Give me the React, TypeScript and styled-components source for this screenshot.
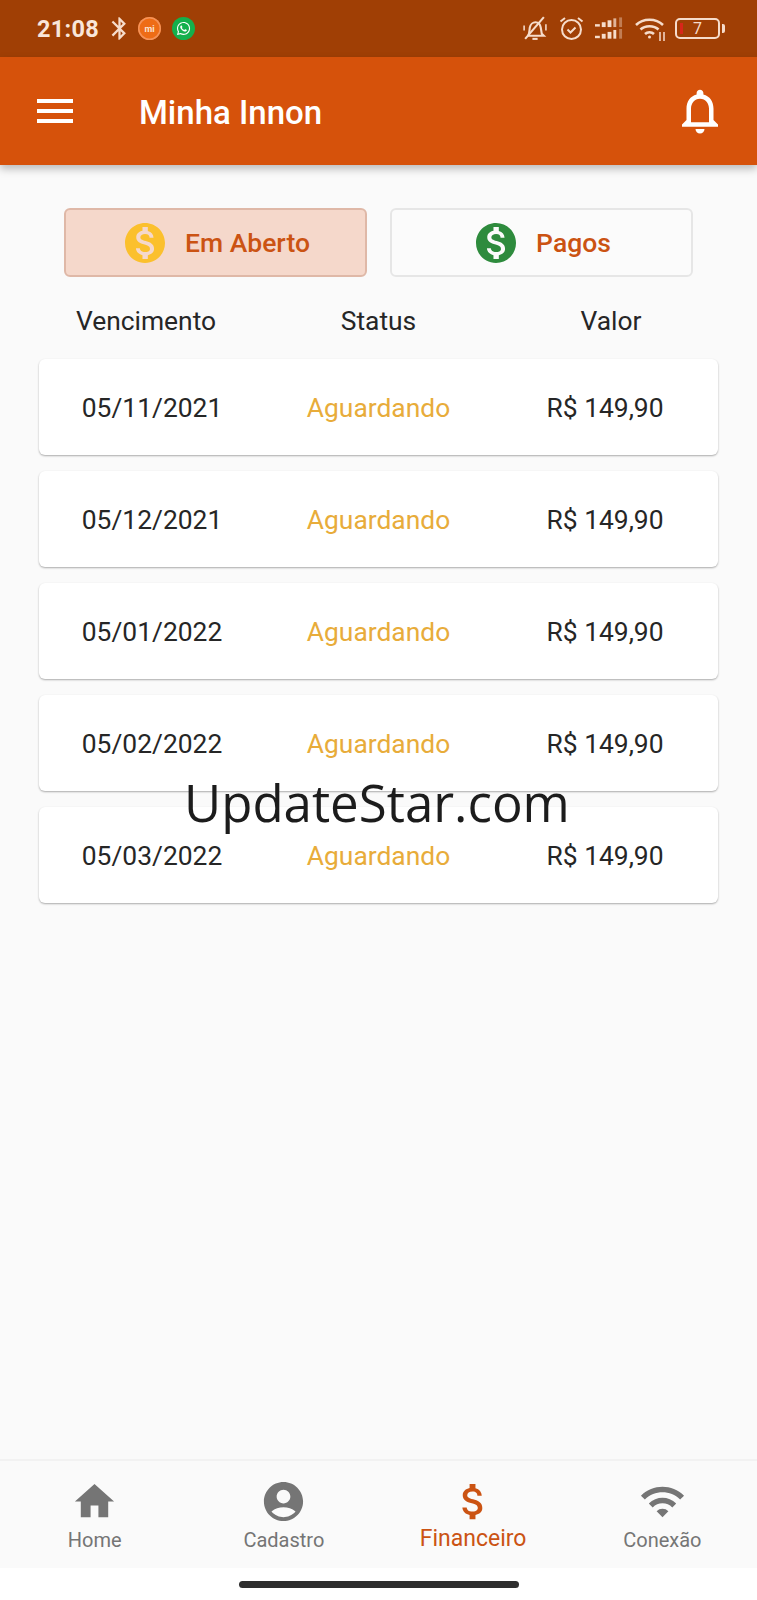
import React from 'react'
import styled, { createGlobalStyle } from 'styled-components'
import { FaWhatsapp } from 'react-icons/fa'
import {
  MdAccountCircle,
  MdAttachMoney,
  MdBluetooth,
  MdHome,
  MdMenu,
  MdMonetizationOn,
  MdNotificationsNone,
  MdWifi,
} from 'react-icons/md'

const parcels = ['05/11/2021', '05/12/2021', '05/01/2022', '05/02/2022', '05/03/2022']

const App: React.FC = () => (
  <Page>
    <GlobalStyle />
    <StatusBar>
      <StatusGroup>
        <Clock>21:08</Clock>
        <MdBluetooth size={27} color="#f6dccb" />
        <MiBadge>mi</MiBadge>
        <WhatsBadge>
          <FaWhatsapp size={15} color="#fff" />
        </WhatsBadge>
      </StatusGroup>
      <StatusGroup $gap={11}>
        <BellOffIcon />
        <AlarmIcon />
        <SignalIcon />
        <WifiIcon />
        <BatteryIcon />
      </StatusGroup>
    </StatusBar>

    <AppBar>
      <MdMenu size={48} color="#fff" />
      <Title>Minha Innon</Title>
      <MdNotificationsNone size={54} color="#fff" />
    </AppBar>

    <Content>
      <Tabs>
        <Tab $active>
          <MdMonetizationOn size={48} color="#fbc02d" />
          <span>Em Aberto</span>
        </Tab>
        <Tab>
          <MdMonetizationOn size={48} color="#2e8b3d" />
          <span>Pagos</span>
        </Tab>
      </Tabs>

      <HeaderRow>
        <HeaderCell>Vencimento</HeaderCell>
        <HeaderCell>Status</HeaderCell>
        <HeaderCell>Valor</HeaderCell>
      </HeaderRow>

      <List>
        {parcels.map((date) => (
          <Card key={date}>
            <span>{date}</span>
            <StatusText>Aguardando</StatusText>
            <span>R$ 149,90</span>
          </Card>
        ))}
      </List>
    </Content>

    <BottomNav>
      <NavItem>
        <MdHome size={47} />
        <span>Home</span>
      </NavItem>
      <NavItem>
        <MdAccountCircle size={47} />
        <span>Cadastro</span>
      </NavItem>
      <NavItem $active>
        <MdAttachMoney size={47} />
        <span>Financeiro</span>
      </NavItem>
      <NavItem>
        <MdWifi size={47} />
        <span>Conexão</span>
      </NavItem>
    </BottomNav>

    <HomeArea>
      <HomeBar />
    </HomeArea>

    <Watermark>UpdateStar.com</Watermark>
  </Page>
)

const BellOffIcon = () => (
  <svg width="27" height="27" viewBox="0 0 26 26" fill="none" stroke="#f6dccb" strokeWidth="2">
    <path d="M7 20c1-2 1-4 1.500-8 .5-3 3-5 5.500-5s4.500 2 5 5l1 6 2 2z" />
    <path d="M11 23h5" />
    <path d="M4 23 22 2" />
    <path d="M3 10v5M24 9v6" strokeWidth="1.500" />
  </svg>
)

const AlarmIcon = () => (
  <svg width="25" height="27" viewBox="0 0 25 26" fill="none" stroke="#f6dccb" strokeWidth="2">
    <circle cx="12.500" cy="14" r="9.500" />
    <path d="M8.500 14l3 3 5-5" />
    <path d="M1.500 6 6 2.500M23.500 6 19 2.500" />
  </svg>
)

const SignalIcon = () => (
  <svg width="29" height="24" viewBox="0 0 30 24" fill="#f6dccb">
    <rect x="0" y="7" width="5" height="2.500" />
    <rect x="7" y="5" width="4" height="5" />
    <rect x="13" y="3" width="4" height="7" />
    <rect x="19" y="1" width="3" height="9" opacity=".75" />
    <rect x="25" y="0" width="3" height="10" opacity=".4" />
    <rect x="0" y="19" width="5" height="2.500" />
    <rect x="7" y="17" width="4" height="5" />
    <rect x="13" y="15" width="4" height="7" />
    <rect x="19" y="13" width="3" height="9" />
    <rect x="25" y="12" width="3" height="10" opacity=".4" />
  </svg>
)

const WifiIcon = () => (
  <svg width="31" height="24" viewBox="0 0 31 24" fill="none" stroke="#f6dccb" strokeWidth="2.500">
    <path d="M1 8c7-7 20-7 27 0" />
    <path d="M5.500 12.500c4.500-4.500 13.500-4.500 18 0" />
    <path d="M10 17c2.500-2.500 6.500-2.500 9 0" />
    <circle cx="14.500" cy="20" r="1.500" fill="#f6dccb" stroke="none" />
    <path d="M25 15v9M29 15v9" strokeWidth="1.500" />
  </svg>
)

const BatteryIcon = () => (
  <Battery>
    <BatteryLevel />
    <BatteryText>7</BatteryText>
    <BatteryCap />
  </Battery>
)

const GlobalStyle = createGlobalStyle`
  html, body {
    margin: 0;
    padding: 0;
    background: #fafafa;
  }

  * {
    box-sizing: border-box;
  }
`

const Page = styled.div`
  position: relative;
  display: flex;
  flex-direction: column;
  width: 757px;
  height: 1600px;
  overflow: hidden;
  background: #fafafa;
  font-family: Roboto, "Liberation Sans", sans-serif;
`

const StatusBar = styled.div`
  display: flex;
  flex: 0 0 57px;
  align-items: center;
  justify-content: space-between;
  padding: 0 33px 0 37px;
  background: #a03f05;
`

const StatusGroup = styled.div<{ $gap?: number }>`
  display: flex;
  align-items: center;
  gap: ${(p) => p.$gap ?? 7}px;
`

const Clock = styled.span`
  color: #f9e6da;
  font-size: 23.5px;
  font-weight: 700;
  letter-spacing: 0.3px;
`

const MiBadge = styled.div`
  display: flex;
  align-items: center;
  justify-content: center;
  width: 23px;
  height: 23px;
  margin-left: -2px;
  border-radius: 50%;
  background: #ee6c16;
  box-shadow: inset 0 0 0 1.5px #f4935a;
  color: #fbe3d0;
  font-size: 9px;
  font-weight: 700;
`

const WhatsBadge = styled.div`
  display: flex;
  align-items: center;
  justify-content: center;
  width: 23px;
  height: 23px;
  margin-left: 4px;
  border-radius: 50%;
  background: #14b04c;
`

const Battery = styled.div`
  position: relative;
  display: flex;
  align-items: center;
  justify-content: center;
  width: 45px;
  height: 21px;
  margin: 0 4px 0 -2px;
  border: 2px solid #f6dccb;
  border-radius: 5px;
`

const BatteryLevel = styled.div`
  position: absolute;
  top: 3px;
  left: 3px;
  width: 3px;
  height: 11px;
  background: #d8261a;
`

const BatteryText = styled.span`
  color: #f6dccb;
  font-size: 16px;
  line-height: 1;
`

const BatteryCap = styled.div`
  position: absolute;
  top: 4px;
  right: -7px;
  width: 3px;
  height: 9px;
  border-radius: 0 2px 2px 0;
  background: #f6dccb;
`

const AppBar = styled.header`
  position: relative;
  z-index: 1;
  display: flex;
  flex: 0 0 108px;
  align-items: center;
  padding: 0 30px 0 31px;
  background: #d6520b;
  box-shadow: 0 4px 8px rgba(0, 0, 0, 0.25);
`

const Title = styled.h1`
  flex: 1;
  margin: 0 0 0 60px;
  padding-top: 3px;
  color: #fff;
  font-size: 33px;
  font-weight: 500;
`

const Content = styled.main`
  display: flex;
  flex: 1;
  flex-direction: column;
  padding: 43px 39px 0;
`

const Tabs = styled.div`
  display: flex;
  gap: 23px;
  padding: 0 25px;
`

const Tab = styled.button<{ $active?: boolean }>`
  display: flex;
  flex: 1;
  align-items: center;
  justify-content: center;
  gap: 16px;
  height: 69px;
  padding: 0;
  border: 2px solid ${(p) => (p.$active ? '#dfb8a7' : '#e6e6e6')};
  border-radius: 6px;
  background: ${(p) => (p.$active ? '#f5d8cb' : '#fbfbfb')};
  color: #cb5313;
  font-family: inherit;
  font-size: 26.5px;
  font-weight: 500;
`

const HeaderRow = styled.div`
  display: grid;
  grid-template-columns: 214px 1fr 214px;
  height: 82px;
  align-items: center;
  padding-top: 6px;
`

const HeaderCell = styled.div`
  color: #262626;
  font-size: 26.4px;
  text-align: center;
`

const List = styled.div`
  display: flex;
  flex-direction: column;
  gap: 16px;
`

const Card = styled.div`
  display: grid;
  grid-template-columns: 226px 1fr 226px;
  height: 96px;
  align-items: center;
  padding-top: 2px;
  border-radius: 6px;
  background: #fff;
  box-shadow: 0 1px 2px rgba(0, 0, 0, 0.32);
  color: #262626;
  font-size: 26.4px;
  text-align: center;
`

const StatusText = styled.span`
  color: #e8ac3a;
`

const BottomNav = styled.nav`
  display: grid;
  flex: 0 0 109px;
  grid-template-columns: repeat(4, 1fr);
  border-top: 2px solid #f2f2f2;
  background: #fafafa;
`

const NavItem = styled.div<{ $active?: boolean }>`
  display: flex;
  flex-direction: column;
  align-items: center;
  padding-top: 17px;
  color: ${(p) => (p.$active ? '#cb5313' : '#757575')};
  font-size: ${(p) => (p.$active ? 23 : 20)}px;
  line-height: ${(p) => (p.$active ? 26 : 24)}px;

  span {
    margin-top: ${(p) => (p.$active ? 1 : 3)}px;
  }
`

const HomeArea = styled.div`
  display: flex;
  flex: 0 0 32px;
  justify-content: center;
  padding-top: 13px;
  background: #fff;
`

const HomeBar = styled.div`
  width: 280px;
  height: 7px;
  border-radius: 4px;
  background: #2e2e2e;
`

const Watermark = styled.div`
  position: absolute;
  top: 768px;
  left: 184px;
  color: #1c1c1c;
  font-family: "Open Sans", "Noto Sans", sans-serif;
  font-size: 51px;
  line-height: 68px;
  white-space: nowrap;
`

export default App
